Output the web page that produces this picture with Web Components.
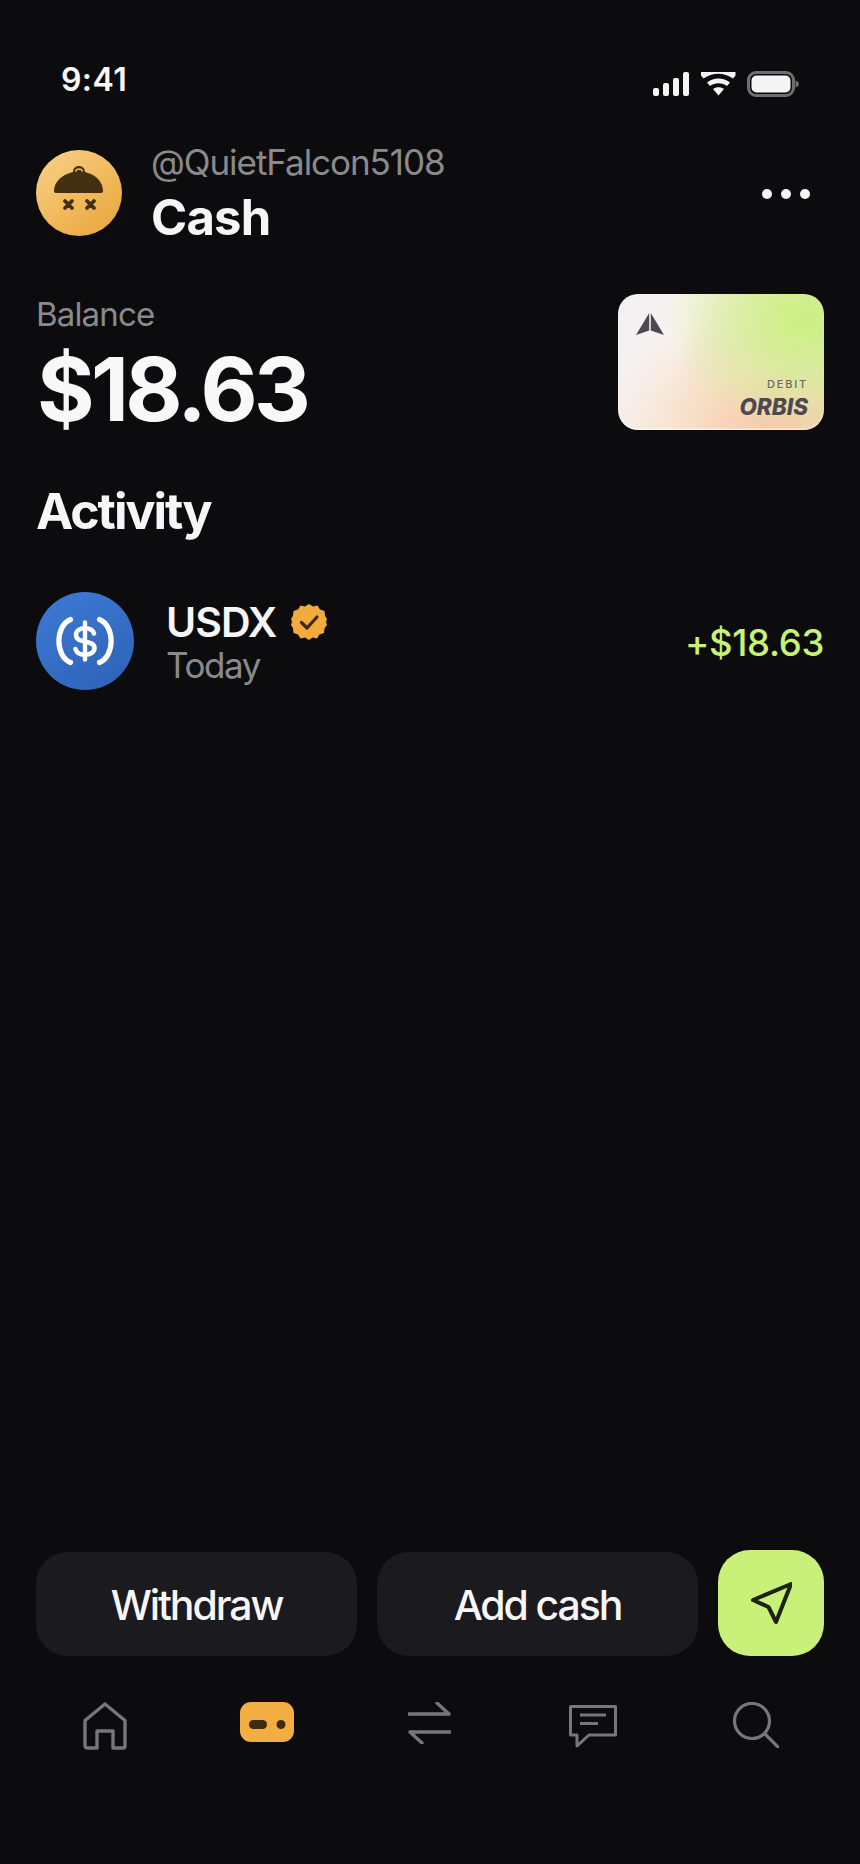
<!DOCTYPE html>
<html lang="en">
<head>
<meta charset="utf-8">
<title>Cash</title>
<style>
  html, body { margin: 0; background: #0c0c0f; }
  body { font-family: Inter, "Liberation Sans", sans-serif; color: #f5f5f5; }
</style>
</head>
<body>
<wallet-screen>
  <status-bar time="9:41"></status-bar>
  <account-header handle="@QuietFalcon5108" title="Cash"></account-header>
  <balance-panel label="Balance" amount="$18.63"></balance-panel>
  <activity-list heading="Activity">
    <activity-row name="USDX" date="Today" amount="+$18.63"></activity-row>
  </activity-list>
  <action-bar></action-bar>
  <tab-bar></tab-bar>
</wallet-screen>

<script>
class WalletScreen extends HTMLElement {
  connectedCallback() {
    this.attachShadow({ mode: 'open' });
    this.shadowRoot.innerHTML = `
      <style>
        :host { display: flex; flex-direction: column; width: 860px; height: 1864px; box-sizing: border-box; padding: 0 36px; overflow: hidden; }
        ::slotted(activity-list) { flex: 1; }
      </style>
      <slot></slot>
    `;
  }
}
customElements.define('wallet-screen', WalletScreen);

class StatusBar extends HTMLElement {
  connectedCallback() {
    this.attachShadow({ mode: 'open' });
    this.shadowRoot.innerHTML = `
      <style>
        :host { display: flex; align-items: center; justify-content: space-between; height: 30px; margin-top: 64px; padding: 0 25px 0 25px; }
        .time { margin-top: 2px; font-size: 32px; font-weight: 600; line-height: 30px; letter-spacing: 0.4px; color: #f7f7f7; }
        .icons { display: flex; align-items: center; gap: 11px; margin-top: 10px; }
        svg { display: block; }
      </style>
      <span class="time">${this.getAttribute('time')}</span>
      <div class="icons">
        <svg width="37" height="24" viewBox="0 0 37 24" fill="#f5f5f5">
          <rect x="0" y="16" width="6" height="8" rx="2"/>
          <rect x="10" y="11" width="6" height="13" rx="2"/>
          <rect x="20" y="6" width="6" height="18" rx="2"/>
          <rect x="30" y="0" width="6" height="24" rx="2"/>
        </svg>
        <svg width="35" height="24" viewBox="0 0 35 24" fill="#f5f5f5">
          <path d="M0 0h34.500v3.500l-2.500 3c-9-6.500-20.500-6.500-29.500 0l-2.500-3z"/>
          <path d="M6 10.500c7-5.500 16-5.500 23 0l-3 3.500c-5-3.800-12-3.800-17 0z"/>
          <path d="M12 17c3.200-2.200 7.800-2.200 11 0l-5.500 6.500z"/>
        </svg>
        <svg width="52" height="26" viewBox="0 0 52 26">
          <rect x="1.500" y="1.500" width="45" height="23" rx="7.500" fill="none" stroke="#6f6f71" stroke-width="3"/>
          <rect x="4.500" y="4.500" width="39" height="17" rx="5" fill="#f5f5f5"/>
          <path d="M48.500 9.500c2 .5 3.500 2 3.500 3.500s-1.500 3-3.500 3.500z" fill="#6f6f71"/>
        </svg>
      </div>
    `;
  }
}
customElements.define('status-bar', StatusBar);

class AccountHeader extends HTMLElement {
  connectedCallback() {
    this.attachShadow({ mode: 'open' });
    this.shadowRoot.innerHTML = `
      <style>
        :host { display: flex; align-items: center; gap: 29px; margin-top: 52px; height: 96px; }
        .avatar { width: 86px; height: 86px; flex: none; margin-bottom: 2px; }
        .names { flex: 1; display: flex; flex-direction: column; }
        .handle { font-size: 35px; line-height: 40px; letter-spacing: -1.050px; color: #8a8a8d; }
        .title { margin-top: 8px; font-size: 49px; line-height: 56px; font-weight: 700; letter-spacing: -0.8px; color: #f6f6f6; }
        .dots { display: flex; gap: 9px; margin-right: 14px; }
        .dots i { width: 10px; height: 10px; border-radius: 50%; background: #f5f5f5; }
        svg { display: block; }
      </style>
      <svg class="avatar" viewBox="0 0 86 86">
        <defs>
          <linearGradient id="a" x1="0.1" y1="0.05" x2="0.85" y2="0.95">
            <stop offset="0" stop-color="#f6cf85"/>
            <stop offset="0.45" stop-color="#f3bd63"/>
            <stop offset="1" stop-color="#eaa83f"/>
          </linearGradient>
        </defs>
        <circle cx="43" cy="43" r="43" fill="url(#a)"/>
        <path d="M18 41c0-9 8-16.500 19-19 0-3.500 2.500-6 6-6s6 2.500 6 6C60 24.500 67 32 67 41c0 1.500-1 2-2.500 2h-44C19 43 18 42.500 18 41z" fill="#432f12"/>
        <path d="M39.500 21.500c.4-1.500 1.800-2.500 3.500-2.500s3.100 1 3.500 2.500" fill="none" stroke="#f3bd63" stroke-width="1.300"/>
        <path d="M29 51l7 7M36 51l-7 7M51 51l7 7M58 51l-7 7" stroke="#432f12" stroke-width="3.800" stroke-linecap="round"/>
      </svg>
      <div class="names">
        <span class="handle">${this.getAttribute('handle')}</span>
        <span class="title">${this.getAttribute('title')}</span>
      </div>
      <div class="dots"><i></i><i></i><i></i></div>
    `;
  }
}
customElements.define('account-header', AccountHeader);

class DebitCard extends HTMLElement {
  connectedCallback() {
    this.attachShadow({ mode: 'open' });
    this.shadowRoot.innerHTML = `
      <style>
        :host { display: flex; flex-direction: column; width: 206px; height: 136px; box-sizing: border-box; padding: 19px 16px 10px 18px; border-radius: 20px; color: #4d4852;
          background:
            radial-gradient(66% 85% at 90% 18%, rgba(203,240,130,1) 0%, rgba(210,238,150,.78) 45%, rgba(222,235,175,0) 100%),
            radial-gradient(85% 90% at 78% 100%, rgba(248,200,170,1) 0%, rgba(248,214,185,.6) 55%, rgba(248,222,195,0) 100%),
            linear-gradient(105deg, #f4f0f3 0%, #f8f3ee 32%, #f7ead4 60%, #eee3b4 100%);
          box-shadow: inset 0 -1.500px 1px rgba(255,255,255,.6); }
        svg { display: block; }
        .type { margin-top: auto; text-align: right; font-size: 11px; line-height: 14px; font-weight: 500; letter-spacing: 1.800px; color: #6b6863; }
        .brand { margin-top: 3px; text-align: right; font-size: 22.500px; line-height: 26px; font-weight: 800; font-style: italic; letter-spacing: 0; }
      </style>
      <svg width="28" height="22" viewBox="0 0 28 22" fill="#4d4852">
        <path d="M13.200 0L0 22l13.200-4.500z"/>
        <path d="M14.800 0L28 22l-13.200-4.500z"/>
      </svg>
      <span class="type">DEBIT</span>
      <span class="brand">ORBIS</span>
    `;
  }
}
customElements.define('debit-card', DebitCard);

class BalancePanel extends HTMLElement {
  connectedCallback() {
    this.attachShadow({ mode: 'open' });
    this.shadowRoot.innerHTML = `
      <style>
        :host { display: flex; align-items: flex-start; justify-content: space-between; margin-top: 52px; height: 136px; }
        .label { display: block; font-size: 33px; line-height: 40px; letter-spacing: -0.85px; color: #8a8a8d; }
        .amount { display: block; margin: 9px 0 0 1px; font-size: 88px; line-height: 92px; font-weight: 700; letter-spacing: -3.600px; color: #f8f8f8; }
      </style>
      <div>
        <span class="label">${this.getAttribute('label')}</span>
        <span class="amount">${this.getAttribute('amount')}</span>
      </div>
      <debit-card></debit-card>
    `;
  }
}
customElements.define('balance-panel', BalancePanel);

class ActivityList extends HTMLElement {
  connectedCallback() {
    this.attachShadow({ mode: 'open' });
    this.shadowRoot.innerHTML = `
      <style>
        :host { display: block; margin-top: 51px; }
        h2 { margin: 0 0 51px; font-size: 50px; line-height: 60px; font-weight: 700; letter-spacing: -2px; color: #f6f6f6; }
      </style>
      <h2>${this.getAttribute('heading')}</h2>
      <slot></slot>
    `;
  }
}
customElements.define('activity-list', ActivityList);

class ActivityRow extends HTMLElement {
  connectedCallback() {
    this.attachShadow({ mode: 'open' });
    this.shadowRoot.innerHTML = `
      <style>
        :host { display: flex; align-items: center; gap: 32px; height: 98px; }
        svg { display: block; flex: none; }
        .info { flex: 1; display: flex; flex-direction: column; }
        .top { display: flex; align-items: center; gap: 15px; height: 48px; padding-top: 2px; margin-bottom: -2px; }
        .name { font-size: 41px; line-height: 48px; font-weight: 600; letter-spacing: -0.9px; color: #f6f6f6; }
        .date { font-size: 35px; line-height: 42px; letter-spacing: -1.400px; color: #8a8a8d; }
        .amount { margin-top: 4px; font-size: 36.500px; font-weight: 500; line-height: 48px; letter-spacing: -0.3px; color: #c8f178; }
      </style>
      <svg width="98" height="98" viewBox="0 0 98 98">
        <defs>
          <linearGradient id="u" x1="0.2" y1="0" x2="0.8" y2="1">
            <stop offset="0" stop-color="#3b79d3"/>
            <stop offset="1" stop-color="#2f63b8"/>
          </linearGradient>
        </defs>
        <circle cx="49" cy="49" r="49" fill="url(#u)"/>
        <path d="M34.500 27.500C19 34 19 64 34.500 70.500M63.500 27.500C79 34 79 64 63.500 70.500" fill="none" stroke="#fff" stroke-width="5.200" stroke-linecap="round"/>
        <path d="M49 30.500v37" stroke="#fff" stroke-width="4.400" stroke-linecap="round"/>
        <path d="M58 41.500c-1-3.500-4.500-5.300-9-5.300-5.500 0-9 2.800-9 6.800 0 9.500 18.500 3.800 18.500 13 0 4-4 6.800-9.500 6.800-4.800 0-8.500-2-9.500-5.800" fill="none" stroke="#fff" stroke-width="4.600" stroke-linecap="round"/>
      </svg>
      <div class="info">
        <div class="top">
          <span class="name">${this.getAttribute('name')}</span>
          <svg width="36" height="36" viewBox="0 0 36 36">
            <path d="M18 0l4 2.500 4.500-1 2.500 4 4.500 1.500.5 4.700L36 15l-1 3 1 3-2.500 3.300-.5 4.700-4.500 1.500-2.500 4-4.500-1L18 36l-4-2.500-4.500 1-2.500-4L2.500 29 2 24.300 0 21l1-3-1-3 2-3.300.5-4.700L7 5.500l2.500-4 4.500 1z" fill="#f2aa3c"/>
            <path d="M10.500 18.500l5.500 5.500 10-11" fill="none" stroke="#3c2c12" stroke-width="3.200" stroke-linecap="round" stroke-linejoin="round"/>
          </svg>
        </div>
        <span class="date">${this.getAttribute('date')}</span>
      </div>
      <span class="amount">${this.getAttribute('amount')}</span>
    `;
  }
}
customElements.define('activity-row', ActivityRow);

class ActionBar extends HTMLElement {
  connectedCallback() {
    this.attachShadow({ mode: 'open' });
    this.shadowRoot.innerHTML = `
      <style>
        :host { display: flex; align-items: flex-end; gap: 20px; height: 106px; }
        .btn { flex: 1; height: 102px; padding-top: 2px; display: flex; align-items: center; justify-content: center; border-radius: 32px; background: #1b1b1f; font-size: 41px; font-weight: 500; letter-spacing: -2.100px; color: #f6f6f6; }
        .send { flex: none; width: 106px; height: 106px; display: flex; align-items: center; justify-content: center; border-radius: 32px; background: #c9f179; }
      </style>
      <div class="btn">Withdraw</div>
      <div class="btn">Add cash</div>
      <div class="send">
        <svg width="42" height="42" viewBox="0 0 42 42">
          <path d="M3 18L41 2 26 40 18.500 25z" fill="none" stroke="#1c2410" stroke-width="4" stroke-linejoin="round"/>
        </svg>
      </div>
    `;
  }
}
customElements.define('action-bar', ActionBar);

class TabBar extends HTMLElement {
  connectedCallback() {
    this.attachShadow({ mode: 'open' });
    this.shadowRoot.innerHTML = `
      <style>
        :host { display: grid; grid-template-columns: repeat(5, 1fr); margin: 46px 0 0 -14px; width: 815px; height: 162px; align-items: start; }
        .tab { display: flex; justify-content: center; }
        svg { display: block; fill: none; stroke: #77777a; stroke-width: 3.400; }
      </style>
      <div class="tab">
        <svg width="44" height="48" viewBox="0 0 44 48" style="margin-left:2px">
          <path d="M2 44V18.500L22 2l20 16.500V44a2 2 0 0 1-2 2H30V29H14v17H4a2 2 0 0 1-2-2z" stroke-linejoin="round"/>
        </svg>
      </div>
      <div class="tab">
        <svg width="54" height="40" viewBox="0 0 54 40" style="stroke:none">
          <rect width="54" height="40" rx="11" fill="#f2ae42"/>
          <rect x="9" y="18" width="18" height="9" rx="4.500" fill="#3d2c12"/>
          <circle cx="41" cy="22.500" r="4.500" fill="#3d2c12"/>
        </svg>
      </div>
      <div class="tab">
        <svg width="43" height="42" viewBox="0 0 43 42" stroke-linecap="round">
          <path d="M1 12h40M29 1l12 11M42 30H2M14 41L2 30"/>
        </svg>
      </div>
      <div class="tab">
        <svg width="48" height="43" viewBox="0 0 48 43" style="margin-top:3px;stroke-width:3">
          <path d="M1.500 1.500h45v28.500H20L8 41V30H1.500z" stroke-linejoin="round"/>
          <path d="M11 10h26M11 18.500h18"/>
        </svg>
      </div>
      <div class="tab">
        <svg width="46" height="46" viewBox="0 0 46 46" stroke-linecap="round" style="stroke-width:3.200">
          <circle cx="19" cy="19" r="17.500"/>
          <path d="M32 32l13 13"/>
        </svg>
      </div>
    `;
  }
}
customElements.define('tab-bar', TabBar);
</script>
</body>
</html>
